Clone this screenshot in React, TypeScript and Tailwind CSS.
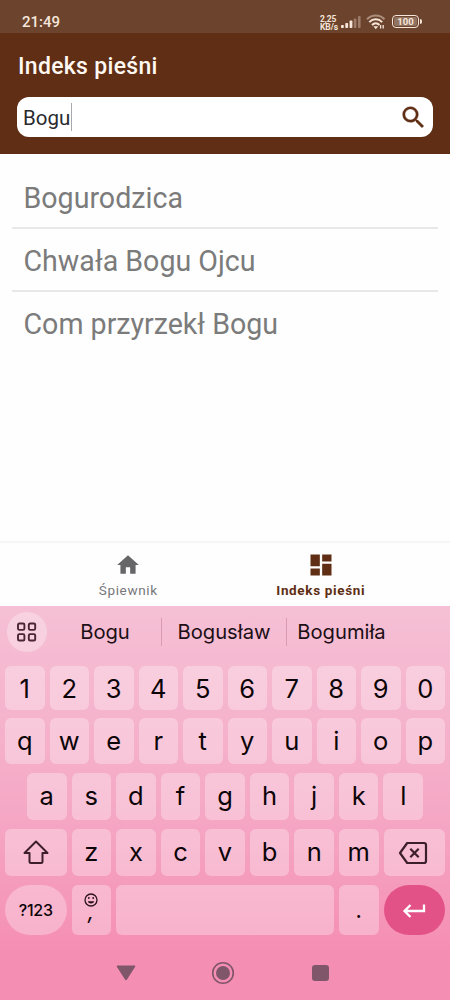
import type { ReactNode } from "react";

import clsx from "clsx";

const songs = ["Bogurodzica", "Chwała Bogu Ojcu", "Com przyrzekł Bogu"];

const numberRow = "1234567890".split("");
const topRow = "qwertyuiop".split("");
const homeRow = "asdfghjkl".split("");
const bottomRow = "zxcvbnm".split("");

function StatusBar() {
  return (
    <div className="flex h-[33px] shrink-0 items-start bg-[#6c442d] pl-[22px] text-[#f6e6da]">
      <span className="mt-[12px] w-[298px] text-[15px] leading-5 font-medium">
        21:49
      </span>

      <span className="mt-[15px] w-[20px] text-[8.5px] leading-[8px] font-bold tracking-[-0.1px] whitespace-nowrap">
        2,25
        <br />
        KB/s
      </span>

      <svg className="mt-[15px] ml-px h-[14px] w-5" viewBox="0 0 20 14" fill="currentColor">
        <rect x="0" y="10" width="2.8" height="3" rx="0.8" />
        <rect x="4.3" y="8" width="2.8" height="5" rx="0.8" />
        <rect x="8.6" y="5.5" width="2.8" height="7.5" rx="0.8" />
        <rect x="12.8" y="3.4" width="2.6" height="9.6" rx="0.8" opacity="0.35" />
        <rect x="17" y="1" width="2.6" height="12" rx="0.8" opacity="0.35" />
      </svg>

      <svg
        className="mt-[14px] ml-[5px] h-4 w-5"
        viewBox="0 0 20 16"
        fill="none"
        stroke="currentColor"
        strokeWidth="2"
      >
        <path d="M1 5.200C6 0.200 13.500 0.200 18.500 5.200" opacity="0.45" />
        <path d="M3.300 8.100C7 4.400 12.500 4.400 16.200 8.100" />
        <path d="M6 11C8.200 8.800 11.300 8.800 13.500 11" />
        <path d="M7.400 12.200L9.800 15.200L12.200 12.200Z" fill="currentColor" stroke="none" />
        <path d="M14.600 11V14.500M17.200 11V14.500" strokeWidth="1.300" />
      </svg>

      <div className="mt-[15px] ml-[6px] flex h-[13px] w-[27px] items-center justify-center rounded-[4px] border-[1.5px] border-current p-px">
        <span className="flex h-full w-full items-center justify-center rounded-[2px] bg-white/25 text-[9.5px] leading-none font-bold">
          100
        </span>
      </div>
      <span className="mt-[19px] ml-px h-[5px] w-[1.5px] rounded-r bg-current" />
    </div>
  );
}

function Header() {
  return (
    <header className="flex h-[121px] shrink-0 flex-col bg-[#5f2e14] px-[17px]">
      <h1 className="mt-[20px] ml-px text-[23px] leading-7 font-medium tracking-[0.3px] text-[#fff8f2]">
        Indeks pieśni
      </h1>

      <div className="mt-[16px] flex h-[40px] items-center rounded-[12px] bg-white pr-[5px] pl-[6px]">
        <span className="pt-[2px] text-[20.5px] leading-7 text-[#2a2a2e]">Bogu</span>
        <span className="ml-px h-[28px] w-px bg-[#a9a9ad]" />
        <svg
          className="ml-auto h-[29px] w-[29px]"
          viewBox="0 0 24 24"
          fill="#5f2e14"
          stroke="#5f2e14"
          strokeWidth="0.300"
        >
          <path d="M15.500 14h-.79l-.28-.27A6.471 6.471 0 0 0 16 9.500 6.500 6.500 0 1 0 9.500 16c1.610 0 3.090-.59 4.230-1.570l.27.280v.79l5 4.990L20.490 19l-4.990-5zm-6 0C7.010 14 5 11.990 5 9.500S7.010 5 9.500 5 14 7.010 14 9.500 11.990 14 9.500 14z" />
        </svg>
      </div>
    </header>
  );
}

function SongList() {
  return (
    <ul className="h-[387px] shrink-0 px-3 pt-[12px]">
      {songs.map((song) => (
        <li
          key={song}
          className="flex h-[63px] items-center border-b-2 border-[#e8e8e8] pt-[4px] pl-[11.5px] text-[28.6px] text-[#7b7b7b] last:border-transparent"
        >
          {song}
        </li>
      ))}
    </ul>
  );
}

function BottomNav() {
  return (
    <nav className="flex h-[65px] shrink-0 border-t-2 border-[#f6f6f6] pr-[33px] pl-8 text-[13.5px] leading-4 tracking-[0.65px]">
      <div className="flex flex-1 flex-col items-center pt-[9px] text-[#77777a]">
        <svg className="h-[26px] w-[26px]" viewBox="0 0 24 24" fill="#666669">
          <path d="M10 20v-6h4v6h5v-8h3L12 3 2 12h3v8z" />
        </svg>
        <span className="mt-[4px]">Śpiewnik</span>
      </div>

      <div className="flex flex-1 flex-col items-center pt-[8px] font-bold text-[#5f2e14]">
        <svg className="h-[28px] w-[28px]" viewBox="0 0 24 24" fill="currentColor">
          <path d="M3 13h8V3H3v10zm0 8h8v-6H3v6zm10 0h8V11h-8v10zm0-18v6h8V3h-8z" />
        </svg>
        <span className="mt-[3px]">Indeks pieśni</span>
      </div>
    </nav>
  );
}

function Key({ children, className }: { children?: ReactNode; className?: string }) {
  return (
    <div
      className={clsx(
        "flex items-center justify-center bg-white/30 text-[25.5px] leading-none text-[#0c0508]",
        className,
      )}
    >
      {children}
    </div>
  );
}

function Suggestions() {
  return (
    <div className="flex h-[50px] items-center pt-px pl-[7px] text-[20.2px] text-[#1c0f15]">
      <div className="flex h-10 w-10 items-center justify-center rounded-full bg-white/30">
        <svg
          className="h-5 w-5"
          viewBox="0 0 20 20"
          fill="none"
          stroke="#4a2535"
          strokeWidth="1.900"
        >
          <rect x="1" y="1.500" width="6.400" height="6.400" rx="1.300" />
          <rect x="11.800" y="1.500" width="6.400" height="6.400" rx="1.300" />
          <rect x="1" y="12.100" width="6.400" height="6.400" rx="1.300" />
          <rect x="11.800" y="12.100" width="6.400" height="6.400" rx="1.300" />
        </svg>
      </div>
      <span className="ml-[2px] w-[112px] pt-[2px] text-center">Bogu</span>
      <span className="h-7 w-px bg-[#d99bb2]" />
      <span className="w-[124px] pt-[2px] text-center">Bogusław</span>
      <span className="h-7 w-px bg-[#d99bb2]" />
      <span className="w-[109px] pt-[2px] text-center">Bogumiła</span>
    </div>
  );
}

function Keyboard() {
  return (
    <section className="flex h-[394px] shrink-0 flex-col bg-linear-to-b from-[#f5c0d5] from-0% via-[#f5a8c5] via-52% to-[#f58eb3] to-88% font-[Inter,sans-serif]">
      <Suggestions />

      <div className="mt-[10px] grid h-[44px] grid-cols-10 gap-[5px] px-[5px]">
        {numberRow.map((key) => (
          <Key key={key} className="rounded-[6px] pt-[2px]">{key}</Key>
        ))}
      </div>

      <div className="mt-[8px] grid h-[46px] grid-cols-10 gap-[5px] px-[5px]">
        {topRow.map((key) => (
          <Key key={key} className="rounded-[6px]">{key}</Key>
        ))}
      </div>

      <div className="mt-[9px] grid h-[47px] grid-cols-9 gap-[5px] px-[27px]">
        {homeRow.map((key) => (
          <Key key={key} className="rounded-[6px] pb-[2px]">{key}</Key>
        ))}
      </div>

      <div className="mt-[9px] flex h-[47px] gap-[5px] px-[5px]">
        <Key className="w-[61.500px] rounded-[6px]">
          <svg
            className="h-[26px] w-[28px]"
            viewBox="0 0 28 26"
            fill="none"
            stroke="#3d1e2c"
            strokeWidth="2"
            strokeLinejoin="round"
          >
            <path d="M14 1.500L25.500 13H20.500V21.500A1.500 1.500 0 0 1 19 23H9A1.500 1.500 0 0 1 7.500 21.500V13H2.500Z" />
          </svg>
        </Key>
        {bottomRow.map((key) => (
          <Key key={key} className="flex-1 rounded-[6px] pb-[2px]">{key}</Key>
        ))}
        <Key className="w-[61.500px] rounded-[6px]">
          <svg
            className="mr-[2px] h-6 w-[30px]"
            viewBox="0 0 30 24"
            fill="none"
            stroke="#3d1e2c"
            strokeWidth="2.200"
            strokeLinejoin="round"
          >
            <path d="M9.200 2H26A2 2 0 0 1 28 4V20A2 2 0 0 1 26 22H9.200L2 12Z" />
            <path d="M12.300 7.800L20.700 16.200M20.700 7.800L12.300 16.200" />
          </svg>
        </Key>
      </div>

      <div className="mt-[9px] flex h-[50px] gap-[5px] px-[5px]">
        <Key className="w-[61.500px] rounded-full">
          <span className="text-[16px] font-medium tracking-[-0.2px]">?123</span>
        </Key>
        <Key className="w-[39px] flex-col rounded-[6px]">
          <svg
            className="h-[14px] w-[14px]"
            viewBox="0 0 14 14"
            fill="none"
            stroke="#2c121e"
            strokeWidth="1.300"
          >
            <circle cx="7" cy="7" r="6" />
            <path d="M3.800 8.200H10.200C9.600 11.200 4.400 11.200 3.800 8.200Z" fill="#2c121e" stroke="none" />
            <circle cx="4.800" cy="5" r="0.900" fill="#2c121e" stroke="none" />
            <circle cx="9.200" cy="5" r="0.900" fill="#2c121e" stroke="none" />
          </svg>
          <span className="h-[20px] text-[22px] leading-[8px] italic">,</span>
        </Key>
        <Key className="flex-1 rounded-[6px]" />
        <Key className="w-[39.500px] rounded-[6px]">
          <span className="text-[22px]">.</span>
        </Key>
        <div className="flex w-[61.500px] items-center justify-center rounded-full bg-[#e35286]">
          <svg
            className="mt-[2px] mr-px h-4 w-6"
            viewBox="0 0 24 16"
            fill="none"
            stroke="#fff"
            strokeWidth="2.300"
          >
            <path d="M22 1.500V8H3M8.500 2L2.500 8L8.500 14" />
          </svg>
        </div>
      </div>

      <div className="mt-[26px] flex h-6 items-center">
        <svg className="ml-[116px] h-4 w-5" viewBox="0 0 20 16" fill="#80566a">
          <path d="M1.500 0.500H18.500Q20 0.500 19 2L11 14.500Q10 16 9 14.500L1 2Q0 0.500 1.500 0.500Z" />
        </svg>
        <svg className="ml-[75px] h-6 w-6" viewBox="0 0 24 24">
          <circle cx="12" cy="12" r="10.300" fill="none" stroke="#80566a" strokeWidth="1.600" />
          <circle cx="12" cy="12" r="7" fill="#80566a" />
        </svg>
        <span className="ml-[77px] h-4 w-[17px] rounded-[3px] bg-[#80566a]" />
      </div>
    </section>
  );
}

export default function App() {
  return (
    <main className="flex h-[1000px] w-[450px] flex-col overflow-hidden bg-[#fefefe] font-[Roboto,sans-serif]">
      <StatusBar />
      <Header />
      <SongList />
      <BottomNav />
      <Keyboard />
    </main>
  );
}
